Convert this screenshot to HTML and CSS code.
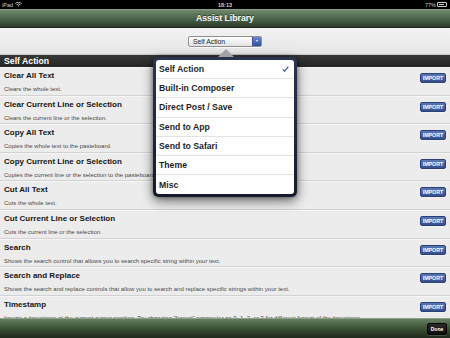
FILE: index.html
```html
<!DOCTYPE html>
<html>
<head>
<meta charset="utf-8">
<link rel="stylesheet" href="styles.css">
</head>
<body>
<div class="screen">
  <div class="status">
    <div class="st-left">iPad
      <svg class="wifi" width="7" height="5" viewBox="0 0 7 5"><path d="M0.3 1.6 A4.5 4.5 0 0 1 6.7 1.6" stroke="#ccc" stroke-width="0.9" fill="none"/><path d="M1.5 2.8 A2.9 2.9 0 0 1 5.5 2.8" stroke="#ccc" stroke-width="0.9" fill="none"/><path d="M3.5 4.8 L2.6 3.8 A1.3 1.3 0 0 1 4.4 3.8 Z" fill="#ccc"/></svg>
    </div>
    <div class="st-center">18:13</div>
    <div class="st-right">77%
      <span class="battery"><span class="battery-fill"></span></span>
    </div>
  </div>
  <div class="navbar"><h1 class="nav-title">Assist Library</h1></div>
  <div class="toolbar">
    <div class="select">
      <span class="select-text">Self Action</span>
      <span class="select-btn"><span class="select-caret"></span></span>
    </div>
  </div>
  <div class="section">Self Action</div>
  <ul class="list">
    <li class="row"><div class="row-text"><div class="row-title">Clear All Text</div><div class="row-desc">Clears the whole text.</div></div><span class="import">IMPORT</span></li>
    <li class="row"><div class="row-text"><div class="row-title">Clear Current Line or Selection</div><div class="row-desc">Clears the current line or the selection.</div></div><span class="import">IMPORT</span></li>
    <li class="row"><div class="row-text"><div class="row-title">Copy All Text</div><div class="row-desc">Copies the whole text to the pasteboard.</div></div><span class="import">IMPORT</span></li>
    <li class="row"><div class="row-text"><div class="row-title">Copy Current Line or Selection</div><div class="row-desc">Copies the current line or the selection to the pasteboard.</div></div><span class="import">IMPORT</span></li>
    <li class="row"><div class="row-text"><div class="row-title">Cut All Text</div><div class="row-desc">Cuts the whole text.</div></div><span class="import">IMPORT</span></li>
    <li class="row"><div class="row-text"><div class="row-title">Cut Current Line or Selection</div><div class="row-desc">Cuts the current line or the selection.</div></div><span class="import">IMPORT</span></li>
    <li class="row"><div class="row-text"><div class="row-title">Search</div><div class="row-desc">Shows the search control that allows you to search specific string within your text.</div></div><span class="import">IMPORT</span></li>
    <li class="row"><div class="row-text"><div class="row-title">Search and Replace</div><div class="row-desc">Shows the search and replace controls that allow you to search and replace specific strings within your text.</div></div><span class="import">IMPORT</span></li>
    <li class="row"><div class="row-text"><div class="row-title">Timestamp</div><div class="row-desc">Inserts a timestamp at the current cursor position. Try changing "format" parameter as 0, 1, 2, or 3 for different format of the timestamp.</div></div><span class="import">IMPORT</span></li>
  </ul>
  <div class="bottombar"><span class="done">Done</span></div>

  <div class="popover">
    <span class="pop-arrow"></span>
    <ul class="pop-list">
      <li class="pop-item">Self Action<svg class="check" width="7" height="6" viewBox="0 0 7 6"><path d="M0.8 3.4 L2.6 5.2 L6.3 0.6" stroke="#3d5fa8" stroke-width="1.3" fill="none"/></svg></li>
      <li class="pop-item">Built-in Composer</li>
      <li class="pop-item">Direct Post / Save</li>
      <li class="pop-item">Send to App</li>
      <li class="pop-item">Send to Safari</li>
      <li class="pop-item">Theme</li>
      <li class="pop-item">Misc</li>
    </ul>
  </div>
</div>
</body>
</html>
```
FILE: styles.css
```css
* { box-sizing: border-box; }
html, body { margin: 0; padding: 0; }
body { font-family: "Liberation Sans", Arial, sans-serif; background: #000; }

.screen {
  position: relative;
  width: 450px;
  height: 338px;
  overflow: hidden;
  display: flex;
  flex-direction: column;
  background: #ececec;
}

.status {
  height: 9px;
  flex: none;
  background: #000;
  color: #cfcfcf;
  font-size: 5.5px;
  display: flex;
  align-items: center;
  justify-content: space-between;
  padding: 0 3px 0 2px;
  position: relative;
}
.st-left { display: flex; align-items: center; gap: 2px; }
.st-center { position: absolute; left: 0; right: 0; text-align: center; top: 1.5px; font-weight: bold; }
.st-right { display: flex; align-items: center; gap: 1px; }
.battery {
  width: 10px; height: 5px; border: 0.8px solid #cfcfcf; border-radius: 1px; padding: 0.6px;
  display: inline-flex;
}
.battery-fill { width: 75%; background: #cfcfcf; }

.navbar {
  height: 19px;
  flex: none;
  background: linear-gradient(#6f8a6c 0%, #50684d 45%, #2b3b29 100%);
  border-top: 1px solid #8aa086;
  border-bottom: 1px solid #1c261b;
  display: flex;
  align-items: center;
  justify-content: center;
}
.nav-title {
  margin: 0 0 1px 0;
  font-size: 8.7px;
  font-weight: bold;
  color: #fff;
  text-shadow: 0 -1px 0 rgba(0,0,0,0.5);
}

.toolbar {
  height: 27px;
  flex: none;
  background: linear-gradient(#f3f3f3, #e6e6e6);
  border-bottom: 1px solid #c8c8c8;
  display: flex;
  align-items: center;
  justify-content: center;
}
.select {
  width: 74px;
  height: 11px;
  display: flex;
  border: 1px solid #8f8f8f;
  border-radius: 2px;
  background: linear-gradient(#ffffff, #e2e2e2);
  overflow: hidden;
  box-shadow: 0 1px 0 rgba(255,255,255,0.8);
}
.select-text {
  flex: 1;
  font-size: 6.8px;
  color: #222;
  padding-left: 4px;
  line-height: 9px;
}
.select-btn {
  width: 9px;
  background: linear-gradient(#6d8ad0, #2f4e9e);
  border-left: 1px solid #3a5697;
  display: flex;
  align-items: center;
  justify-content: center;
}
.select-caret {
  width: 0; height: 0;
  border-left: 1.5px solid transparent;
  border-right: 1.5px solid transparent;
  border-top: 2px solid #fff;
}

.section {
  height: 12px;
  flex: none;
  background: linear-gradient(#383838, #262626);
  color: #fff;
  font-weight: bold;
  font-size: 8.7px;
  line-height: 12px;
  padding-left: 4px;
}

.list {
  list-style: none;
  margin: 0;
  padding: 0;
  flex: 1;
  overflow: hidden;
}
.row {
  height: 28.6px;
  display: flex;
  justify-content: space-between;
  align-items: flex-start;
  padding: 4px 4px 0 4px;
  border-bottom: 1px solid #d2d2d2;
  background: #ececec;
  box-shadow: inset 0 1px 0 #f6f6f6;
}
.row-text { min-width: 0; flex: 1; white-space: nowrap; }
.row-title {
  font-size: 8px;
  font-weight: bold;
  line-height: 10px;
  color: #151515;
}
.row-desc {
  font-size: 6px;
  line-height: 8px;
  margin-top: 4px;
  color: #4a4a4a;
}
.import {
  flex: none;
  width: 26px;
  height: 10px;
  margin-top: 2px;
  border-radius: 2px;
  background: linear-gradient(#5a78b6, #344f8e);
  border: 0.7px solid #2a3f72;
  color: #fff;
  font-size: 5.3px;
  font-weight: bold;
  line-height: 9px;
  text-align: center;
  box-shadow: 0 0.5px 0 rgba(255,255,255,0.7);
}

.bottombar {
  height: 20px;
  flex: none;
  background: linear-gradient(#66805f 0%, #3f5539 45%, #1c2819 100%);
  border-top: 1px solid #8ea089;
  display: flex;
  align-items: center;
  justify-content: flex-end;
  padding-right: 3px;
}
.done {
  width: 20px;
  height: 12px;
  border-radius: 2px;
  background: linear-gradient(#2a2a2a, #0c0c0c);
  border: 0.7px solid #000;
  color: #fff;
  font-size: 5px;
  font-weight: bold;
  line-height: 11px;
  text-align: center;
  box-shadow: 0 0.5px 0 rgba(255,255,255,0.3);
}

.popover {
  position: absolute;
  left: 153px;
  top: 57px;
  width: 144px;
  padding: 3px;
  border-radius: 5px;
  background: linear-gradient(#2a3550, #141b2c);
  box-shadow: 0 4px 12px rgba(0,0,0,0.55), 0 0 4px rgba(0,0,0,0.35);
}
.pop-arrow {
  position: absolute;
  left: 65px;
  top: -8px;
  width: 0; height: 0;
  border-left: 8.5px solid transparent;
  border-right: 8.5px solid transparent;
  border-bottom: 8px solid #9fa3a8;
}
.pop-list {
  list-style: none;
  margin: 0;
  padding: 0;
  background: #fff;
  border-radius: 3px;
  overflow: hidden;
}
.pop-item {
  height: 19.2px;
  display: flex;
  align-items: center;
  justify-content: space-between;
  padding: 0 5px 0 3px;
  font-size: 8.7px;
  font-weight: bold;
  color: #1e1e1e;
  border-bottom: 1px solid #e3e3e3;
}
.pop-item:last-child { border-bottom: none; }
.check { flex: none; }
```
